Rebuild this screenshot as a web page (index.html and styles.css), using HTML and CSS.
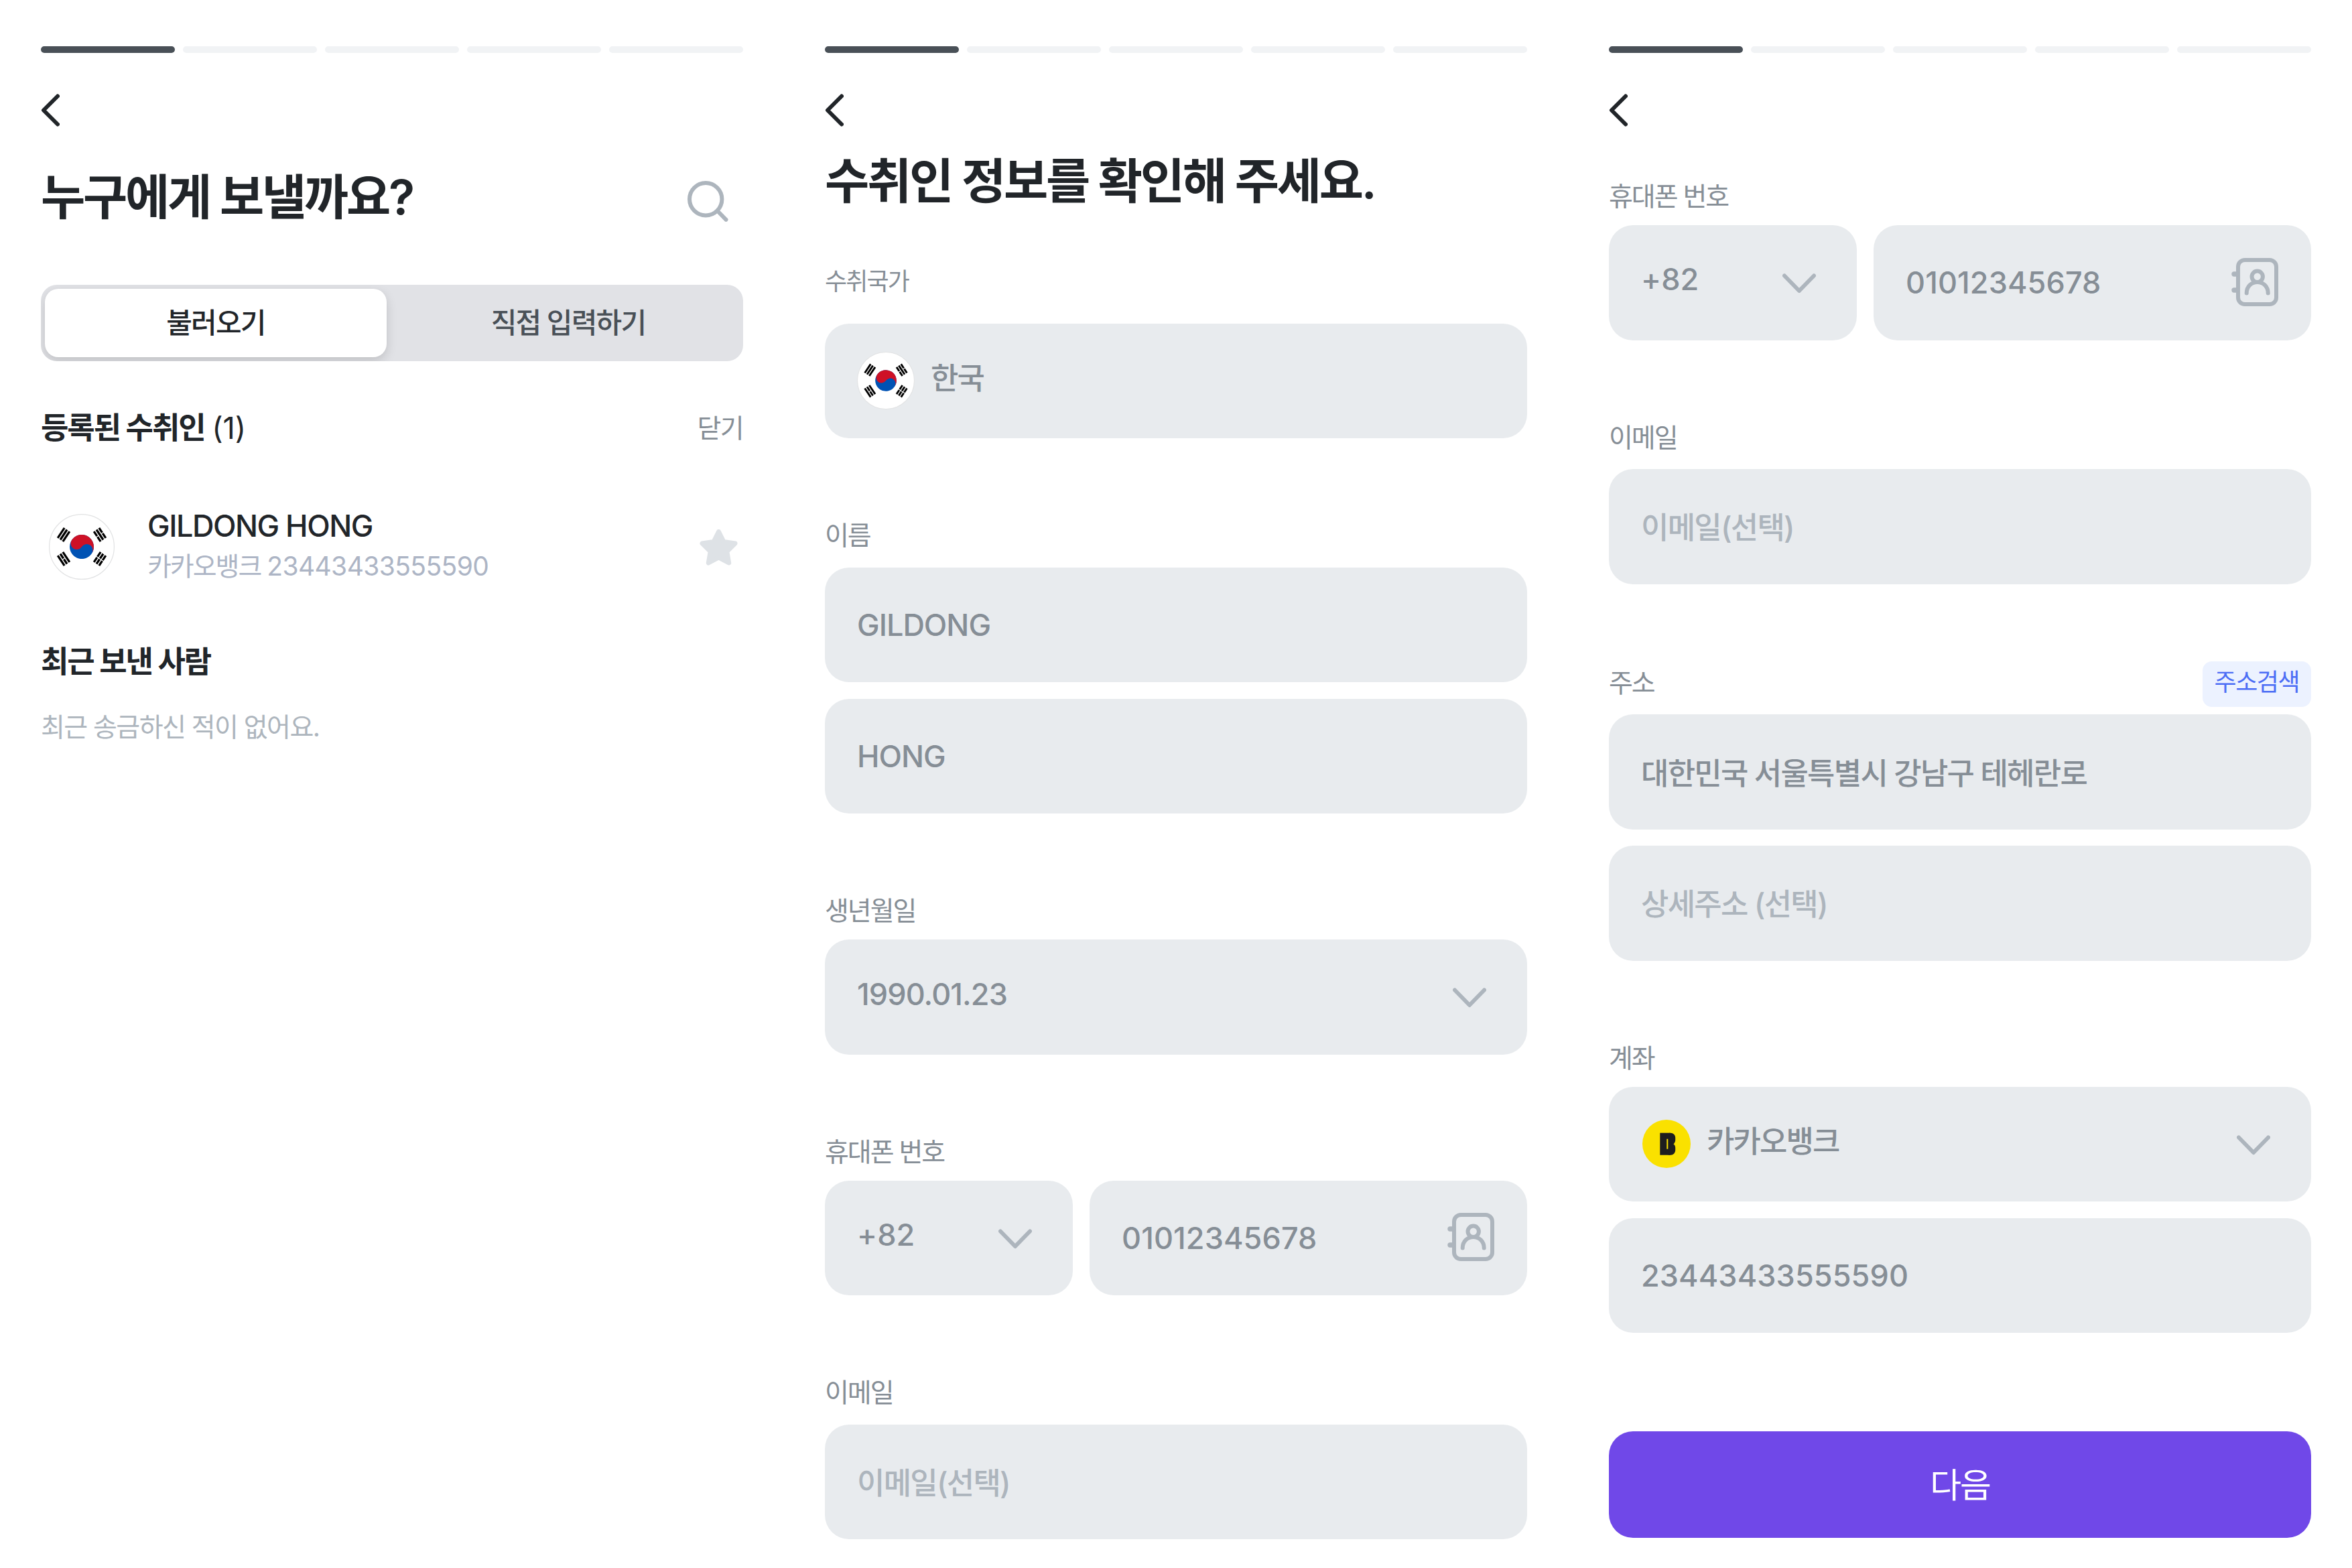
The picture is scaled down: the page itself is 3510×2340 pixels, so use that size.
FILE: index.html
```html
<!DOCTYPE html>
<html lang="ko">
<head>
  <meta charset="UTF-8">
  <meta name="viewport" content="width=device-width, initial-scale=1.0">
  <title>수취인 정보</title>
  <link rel="stylesheet" href="styles.css">
</head>
<body>

  <!-- shared icons -->
  <svg class="icon-defs" width="0" height="0">
    <symbol id="icon-back" viewBox="0 0 28 49">
      <path d="M25 3.5L4 24.5L25 45.5" fill="none" stroke="#212529" stroke-width="6" stroke-linecap="round" stroke-linejoin="round"/>
    </symbol>
    <symbol id="icon-down" viewBox="0 0 50 30">
      <path d="M3 3.5L25 26L47 3.5" fill="none" stroke="#adb5bd" stroke-width="6" stroke-linecap="round" stroke-linejoin="round"/>
    </symbol>
    <symbol id="icon-contact" viewBox="0 0 70 72">
      <g fill="none" stroke="#adb5bd" stroke-width="6" stroke-linecap="round">
        <rect x="10" y="3" width="57" height="66" rx="10"/>
        <circle cx="38.7" cy="27.8" r="8.2"/>
        <path d="M22.7 52.5C22.7 43 29.5 36 38.7 36C47.9 36 54.7 43 54.7 52.5"/>
        <path d="M4 24H8M4 48H8" stroke-width="7.4"/>
      </g>
    </symbol>
    <symbol id="flag-kr" viewBox="-49 -49 98 98">
      <circle r="48.4" fill="#fff" stroke="#e1e2e3" stroke-width="1.2"/>
      <g transform="rotate(33.7)">
        <circle r="18" fill="#0052b4"/>
        <path d="M-18 0A18 18 0 0 1 18 0A9 9 0 0 0 0 0A9 9 0 0 1 -18 0Z" fill="#ce1126"/>
      </g>
      <g stroke="#000" stroke-width="3.2">
        <g transform="translate(-27 -18) rotate(33.7)">
          <path d="M-4.6 -9V9M0 -9V9M4.6 -9V9"/>
        </g>
        <g transform="translate(27 18) rotate(33.7)">
          <path d="M-4.6 -9V-.6M-4.6 .6V9M0 -9V-.6M0 .6V9M4.6 -9V-.6M4.6 .6V9"/>
        </g>
        <g transform="translate(27 -18) rotate(-33.7)">
          <path d="M-4.6 -9V-.6M-4.6 .6V9M0 -9V9M4.6 -9V-.6M4.6 .6V9"/>
        </g>
        <g transform="translate(-27 18) rotate(-33.7)">
          <path d="M-4.6 -9V9M0 -9V-.6M0 .6V9M4.6 -9V9"/>
        </g>
      </g>
    </symbol>
  </svg>

  <div class="screens">

    <section class="screen">
      <div class="progress"><i class="on"></i><i></i><i></i><i></i><i></i></div>
      <svg class="back"><use href="#icon-back"/></svg>
      <div class="title-row">
        <h1>누구에게 보낼까요?</h1>
        <svg class="search" viewBox="0 0 61 61">
          <circle cx="27.2" cy="27.2" r="24.2" fill="none" stroke="#adb5bd" stroke-width="6"/>
          <path d="M44.5 44.5L57.5 57.8" stroke="#adb5bd" stroke-width="6" stroke-linecap="round"/>
        </svg>
      </div>
      <div class="tabs">
        <div class="tab active">불러오기</div>
        <div class="tab">직접 입력하기</div>
      </div>
      <div class="list-head">
        <h2>등록된 수취인 <span class="count">(1)</span></h2>
        <span class="close">닫기</span>
      </div>
      <div class="recipient">
        <svg class="flag"><use href="#flag-kr"/></svg>
        <div class="recipient-info">
          <div class="name">GILDONG HONG</div>
          <div class="account">카카오뱅크 <span class="num">23443433555590</span></div>
        </div>
        <svg class="star" viewBox="0 0 57 54">
          <path d="M28.5 3.5L36 18.5L53 21L40.8 33L43.7 50L28.5 42L13.3 50L16.2 33L4 21L21 18.5Z" fill="#dee2e6" stroke="#dee2e6" stroke-width="7" stroke-linejoin="round"/>
        </svg>
      </div>
      <h2 class="recent">최근 보낸 사람</h2>
      <p class="empty">최근 송금하신 적이 없어요.</p>
    </section>

    <section class="screen">
      <div class="progress"><i class="on"></i><i></i><i></i><i></i><i></i></div>
      <svg class="back"><use href="#icon-back"/></svg>
      <h1 class="form-title">수취인 정보를 확인해 주세요.</h1>
      <div class="group country">
        <div class="label small">수취국가</div>
        <div class="field">
          <svg class="field-flag"><use href="#flag-kr"/></svg>
          <span class="value">한국</span>
        </div>
      </div>
      <div class="group">
        <div class="label far">이름</div>
        <div class="field latin">GILDONG</div>
        <div class="field latin">HONG</div>
      </div>
      <div class="group">
        <div class="label">생년월일</div>
        <div class="field">
          <span class="value date">1990.01.23</span>
          <svg class="down"><use href="#icon-down"/></svg>
        </div>
      </div>
      <div class="group">
        <div class="label">휴대폰 번호</div>
        <div class="phone">
          <div class="field code">
            <span class="value num">+82</span>
            <svg class="down"><use href="#icon-down"/></svg>
          </div>
          <div class="field number">
            <span class="num">01012345678</span>
            <svg class="contact"><use href="#icon-contact"/></svg>
          </div>
        </div>
      </div>
      <div class="group">
        <div class="label far">이메일</div>
        <div class="field placeholder">이메일(선택)</div>
      </div>
    </section>

    <section class="screen">
      <div class="progress"><i class="on"></i><i></i><i></i><i></i><i></i></div>
      <svg class="back"><use href="#icon-back"/></svg>
      <div class="group first">
        <div class="label">휴대폰 번호</div>
        <div class="phone">
          <div class="field code">
            <span class="value num">+82</span>
            <svg class="down"><use href="#icon-down"/></svg>
          </div>
          <div class="field number">
            <span class="num">01012345678</span>
            <svg class="contact"><use href="#icon-contact"/></svg>
          </div>
        </div>
      </div>
      <div class="group">
        <div class="label far">이메일</div>
        <div class="field placeholder">이메일(선택)</div>
      </div>
      <div class="group address">
        <div class="label far">주소 <span class="badge">주소검색</span></div>
        <div class="field">대한민국 서울특별시 강남구 테헤란로</div>
        <div class="field placeholder">상세주소 (선택)</div>
      </div>
      <div class="group">
        <div class="label">계좌</div>
        <div class="field">
          <svg class="bank" viewBox="-36 -36 72 72">
            <circle r="36" fill="#fae100"/>
            <rect x="-9.7" y="-16.3" width="15" height="33" fill="#1e1e1e"/>
            <rect x="-2" y="-16.3" width="15.2" height="18" rx="7" fill="#1e1e1e"/>
            <rect x="-2" y="-1.3" width="15.2" height="18" rx="7" fill="#1e1e1e"/>
            <rect x=".3" y="-7.3" width="2" height="15" fill="#fae100"/>
          </svg>
          <span class="value">카카오뱅크</span>
          <svg class="down"><use href="#icon-down"/></svg>
        </div>
        <div class="field"><span class="num">23443433555590</span></div>
      </div>
      <button type="button" class="next">다음</button>
    </section>

  </div>

</body>
</html>
```
FILE: styles.css
```css
* {
  box-sizing: border-box;
  letter-spacing: -0.042em;
}
body {
  margin: 0;
  background-color: #fff;
  color: #212529;
  font-family: Inter, "Noto Sans CJK KR", sans-serif;
}
h1, h2, p {
  margin: 0;
}
svg {
  display: block;
  flex: none;
}
.icon-defs {
  position: absolute;
}
.screens {
  display: grid;
  grid-template-columns: repeat(3, 1170px);
}
.screen {
  height: 2297px;
  padding: 69px 61px 0;
  overflow: hidden;
}

/* header */
.progress {
  display: flex;
  gap: 12px;
}
.progress i {
  flex: 1;
  height: 10px;
  border-radius: 5px;
  background-color: #f1f3f5;
}
.progress .on {
  background-color: #495057;
}
.back {
  width: 28px;
  height: 49px;
  margin-top: 61px;
}
h1 {
  font-size: 72px;
  font-weight: 600;
  line-height: 88px;
  letter-spacing: -0.045em;
  white-space: nowrap;
}
.title-row {
  display: flex;
  justify-content: space-between;
  align-items: center;
  height: 88px;
  margin-top: 61px;
}
.search {
  width: 61px;
  height: 61px;
  margin: 13px 22px 0 0;
}
.form-title {
  margin-top: 37px;
}

/* recipient list */
.tabs {
  display: flex;
  gap: 16px;
  height: 114px;
  margin-top: 87px;
  padding: 6px;
  border-radius: 24px;
  background-color: #e1e2e6;
  overflow: hidden;
}
.tab {
  flex: 1;
  border-radius: 20px;
  font-size: 42px;
  font-weight: 500;
  line-height: 102px;
  text-align: center;
  color: #495057;
}
.tab.active {
  background-color: #fff;
  color: #212529;
  box-shadow: 0 6px 16px rgba(0, 0, 0, 0.15);
}
.list-head {
  display: flex;
  justify-content: space-between;
  margin-top: 70px;
  line-height: 60px;
}
h2 {
  font-size: 45px;
  font-weight: 700;
  line-height: 60px;
  letter-spacing: -0.046em;
}
.count {
  margin-left: 2px;
  font-weight: 400;
  letter-spacing: 0;
}
.close {
  font-size: 39px;
  color: #868e96;
}
.recipient {
  display: flex;
  align-items: center;
  height: 119px;
  margin-top: 86px;
  padding: 0 8px 0 12px;
}
.flag {
  width: 98px;
  height: 98px;
  margin-top: 3px;
}
.recipient-info {
  flex: 1;
  margin-left: 49px;
  line-height: 59.5px;
}
.name {
  font-size: 45px;
  font-weight: 500;
  letter-spacing: -0.033em;
}
.account {
  font-size: 39px;
  letter-spacing: -0.052em;
  color: #adb5c5;
}
.account .num {
  letter-spacing: -0.015em;
}
.star {
  width: 57px;
  height: 54px;
  margin-top: 4px;
}
.recent {
  margin-top: 84px;
}
.empty {
  margin-top: 37px;
  font-size: 39px;
  line-height: 60px;
  letter-spacing: -0.04em;
  color: #adb5bd;
}

/* form */
.group {
  display: flex;
  flex-direction: column;
  gap: 24.5px;
  margin-top: 125px;
}
.group.country {
  gap: 43px;
  margin-top: 86px;
}
.group.first {
  margin-top: 84px;
}
.group.address {
  margin-top: 127px;
}
.label {
  display: flex;
  justify-content: space-between;
  align-items: center;
  height: 40px;
  margin-bottom: -1.5px;
  font-size: 39px;
  line-height: 40px;
  letter-spacing: -0.052em;
  color: #868e96;
}
.label.small {
  margin-bottom: -0.5px;
  font-size: 36px;
}
.label.far {
  margin-bottom: 3px;
}
.badge {
  height: 68px;
  margin-top: 4px;
  padding: 0 18px;
  border-radius: 14px;
  background-color: #ecf2ff;
  color: #4c6ef5;
  font-size: 36px;
  line-height: 62px;
}
.field {
  display: flex;
  align-items: center;
  height: 171.5px;
  padding: 0 48px;
  border-radius: 36px;
  background-color: #e8ebee;
  color: #868e96;
  font-size: 45px;
  font-weight: 450;
  letter-spacing: -0.039em;
}
.placeholder {
  padding-bottom: 2px;
  color: #adb5bd;
}
.value {
  margin-bottom: 14px;
}
.latin {
  font-weight: 500;
  letter-spacing: -0.022em;
}
.num {
  letter-spacing: 0.002em;
}
.field .num {
  font-weight: 500;
}
.date {
  margin-bottom: 9px;
  font-weight: 500;
  letter-spacing: -0.02em;
}
.code .value {
  margin-bottom: 10px;
}
.down {
  width: 50px;
  height: 30px;
  margin: 3px 13px 0 auto;
}
.field-flag {
  width: 86px;
  height: 86px;
  margin-right: 24px;
}
.bank {
  width: 72px;
  height: 72px;
  margin: 0 24px 0 2px;
}
.phone {
  display: flex;
  gap: 25px;
}
.code {
  width: 370px;
}
.number {
  flex: 1;
  justify-content: space-between;
}
.contact {
  width: 70px;
  height: 72px;
  margin: 0 1px 2px 0;
}
.next {
  display: block;
  width: 100%;
  height: 159px;
  margin-top: 147px;
  padding: 0 0 6px;
  border: none;
  border-radius: 36px;
  background-color: #7048e8;
  color: #fff;
  font-family: inherit;
  font-size: 51px;
}
```
